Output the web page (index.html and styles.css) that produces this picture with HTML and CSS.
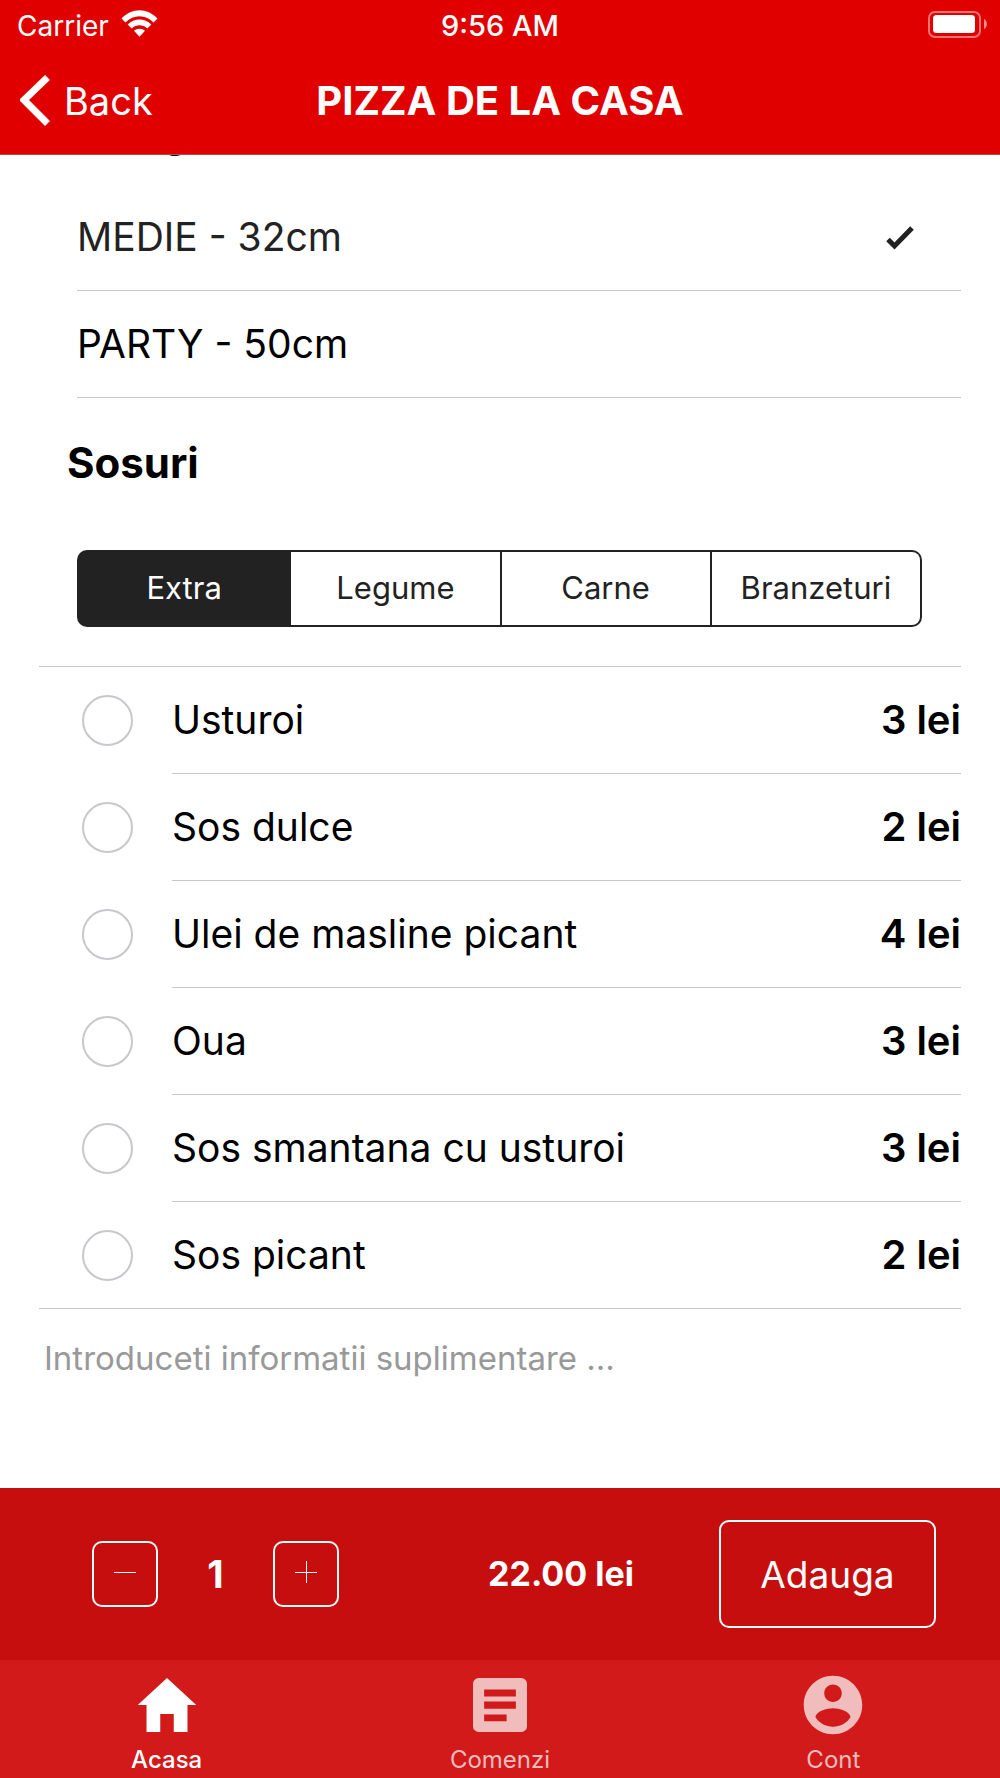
FILE: index.html
```html
<!DOCTYPE html>
<html lang="ro">
<head>
<meta charset="utf-8">
<meta name="viewport" content="width=device-width, initial-scale=1">
<title>Pizza de la casa</title>
<link rel="stylesheet" href="styles.css">
</head>
<body>
<header class="header">
  <div class="status">
    <span class="status-carrier">Carrier
      <svg class="wifi" viewBox="0 0 37 32" width="37" height="32" aria-hidden="true">
        <path d="M0.5 8.5C11-2.5 26-2.5 36.500 8.500L32.500 12.500C24.500 4.300 12.500 4.300 4.500 12.500Z"/>
        <path d="M6.700 14.500C13.500 7.700 23.500 7.700 30.300 14.500L26.300 18.500C21.800 14.200 15.200 14.200 10.700 18.500Z"/>
        <path d="M13 20.800C16 18 21 18 24 20.800L18.500 26.700Z"/>
      </svg>
    </span>
    <span class="status-time">9:56 AM</span>
    <svg class="battery" viewBox="0 0 60 30" width="60" height="30" aria-hidden="true">
      <rect class="battery-frame" x="1" y="1" width="51" height="25" rx="6"/>
      <rect x="5" y="4" width="42" height="18" rx="3.500"/>
      <path class="battery-tip" d="M56 8C59.800 9.500 59.800 16.500 56 18Z"/>
    </svg>
  </div>
  <nav class="navbar">
    <a class="back" href="#">
      <svg viewBox="0 0 30 52" width="30" height="52" aria-hidden="true"><path d="M27.500 2.500L4 25L27.500 48.500"/></svg>
      Back
    </a>
    <h1 class="title">PIZZA DE LA CASA</h1>
  </nav>
</header>

<main class="content">
  <h2 class="heading heading-scrolled">Categorie</h2>
  <div class="sizes">
    <label class="size size-selected">
      <input type="radio" name="size" checked>
      <span>MEDIE - 32cm</span>
      <svg class="tick" viewBox="0 0 28 25" width="28" height="25" aria-hidden="true"><path d="M2 14.500L8.500 21L26 3"/></svg>
    </label>
    <label class="size">
      <input type="radio" name="size">
      <span>PARTY - 50cm</span>
    </label>
  </div>

  <h2 class="heading">Sosuri</h2>
  <div class="segments">
    <button class="segment segment-active" type="button">Extra</button>
    <button class="segment" type="button">Legume</button>
    <button class="segment" type="button">Carne</button>
    <button class="segment" type="button">Branzeturi</button>
  </div>

  <div class="extras">
    <label class="extra"><input class="check" type="checkbox"><span class="extra-text"><span>Usturoi</span><b>3 lei</b></span></label>
    <label class="extra"><input class="check" type="checkbox"><span class="extra-text"><span>Sos dulce</span><b>2 lei</b></span></label>
    <label class="extra"><input class="check" type="checkbox"><span class="extra-text"><span>Ulei de masline picant</span><b>4 lei</b></span></label>
    <label class="extra"><input class="check" type="checkbox"><span class="extra-text"><span>Oua</span><b>3 lei</b></span></label>
    <label class="extra"><input class="check" type="checkbox"><span class="extra-text"><span>Sos smantana cu usturoi</span><b>3 lei</b></span></label>
    <label class="extra"><input class="check" type="checkbox"><span class="extra-text"><span>Sos picant</span><b>2 lei</b></span></label>
  </div>
  <textarea class="notes" rows="3" aria-label="Informatii suplimentare" placeholder="Introduceti informatii suplimentare ..."></textarea>
</main>

<footer class="footer">
  <div class="order">
    <div class="quantity">
      <button class="step" type="button" aria-label="Mai putin">
        <svg viewBox="0 0 22 22" width="22" height="22" aria-hidden="true"><path d="M0 11H22"/></svg>
      </button>
      <span class="count">1</span>
      <button class="step" type="button" aria-label="Mai mult">
        <svg viewBox="0 0 22 22" width="22" height="22" aria-hidden="true"><path d="M0 11H22M11 0V22"/></svg>
      </button>
    </div>
    <span class="total">22.00 lei</span>
    <button class="add" type="button">Adauga</button>
  </div>
  <nav class="tabs">
    <a class="tab tab-active" href="#">
      <svg viewBox="0 0 512 512" width="72" height="72" aria-hidden="true"><path d="M208 448V320h96v128h97.600V256H464L256 64 48 256h62.400v192z"/></svg>
      Acasa
    </a>
    <a class="tab" href="#">
      <svg viewBox="0 0 512 512" width="72" height="72" aria-hidden="true"><path fill-rule="evenodd" d="M104 64H408a40 40 0 0 1 40 40V408a40 40 0 0 1-40 40H104a40 40 0 0 1-40-40V104a40 40 0 0 1 40-40ZM143 145V195H369V145ZM143 231V283H369V231ZM143 324V372H303V324Z"/></svg>
      Comenzi
    </a>
    <a class="tab" href="#">
      <svg viewBox="0 0 512 512" width="72" height="72" aria-hidden="true"><path fill-rule="evenodd" d="M256 48C141.100 48 48 141.100 48 256s93.100 208 208 208 208-93.100 208-208S370.900 48 256 48zm0 62.400c34.500 0 62.400 27.900 62.400 62.400s-27.900 62.400-62.400 62.400-62.400-27.900-62.400-62.400 27.900-62.400 62.400-62.400zm0 300.400c-52 0-97.800-27-124.800-67.600.6-41.200 83.200-64 124.800-64s124.200 22.800 124.800 64c-27 40.600-72.800 67.600-124.800 67.600z"/></svg>
      Cont
    </a>
  </nav>
</footer>
</body>
</html>
```
FILE: styles.css
```css
* { box-sizing: border-box; }

body {
  margin: 0;
  min-height: 100vh;
  display: flex;
  flex-direction: column;
  background: #fff;
  color: #000;
  font: 400 39px/48px Inter, "Liberation Sans", sans-serif;
}

button, textarea { font: inherit; color: inherit; }
a { color: inherit; text-decoration: none; }
svg { display: block; flex: none; }

/* Header */
.header {
  background: #e10000;
  color: #fff;
  border-bottom: 1px solid #b84848;
}
.status {
  display: grid;
  grid-template-columns: 1fr auto 1fr;
  align-items: center;
  height: 52px;
  padding: 0 12px;
  font-size: 28px;
  line-height: 34px;
}
.status-carrier { display: flex; align-items: center; gap: 12px; padding-left: 5px; }
.status-time { font-size: 29px; font-weight: 500; }
.wifi { fill: #fff; }
.battery { fill: #fff; justify-self: end; }
.battery-frame { fill: none; stroke: #fff; stroke-width: 2; opacity: 0.45; }
.battery-tip { opacity: 0.55; }
.navbar {
  display: grid;
  grid-template-columns: 1fr auto 1fr;
  align-items: center;
  height: 102px;
  padding: 0 20px 4px;
}
.back { display: flex; align-items: center; gap: 14px; font-size: 38px; }
.back svg { fill: none; stroke: #fff; stroke-width: 7; }
.title { margin: 0; font-size: 40px; font-weight: 700; }

/* Product options */
.content { flex: 1; overflow: hidden; padding-left: 39px; }
.heading {
  margin: 0;
  padding: 41px 28px 63px;
  font-size: 42px;
  line-height: 48px;
  font-weight: 700;
}
.heading-scrolled { margin-top: -47px; padding: 0 28px 28px; }
.sizes { padding-left: 38px; margin-right: 39px; }
.size {
  display: flex;
  align-items: center;
  justify-content: space-between;
  height: 107px;
  padding-right: 47px;
  border-bottom: 1px solid #c8c7cc;
}
.size input { position: absolute; opacity: 0; }
.size-selected { color: #222; }
.tick { fill: none; stroke: #222; stroke-width: 5; }

.segments {
  display: grid;
  grid-template-columns: repeat(4, 1fr);
  height: 77px;
  margin: 0 78px 39px 38px;
  border: 2px solid #222;
  border-radius: 10px;
  background: #222;
  overflow: hidden;
}
.segment {
  padding: 0 0 2px;
  border: 0;
  border-left: 2px solid #222;
  background: #fff;
  color: #222;
  font-size: 31px;
  line-height: 38px;
}
.segment:first-child { border-left: 0; }
.segment-active { background: #222; color: #fff; }

.extras {
  margin-right: 39px;
  border: solid #c8c7cc;
  border-width: 1px 0;
}
.extra { display: flex; align-items: center; gap: 39px; padding-left: 43px; }
.check {
  appearance: none;
  flex: none;
  width: 51px;
  height: 51px;
  margin: 0;
  border: 2px solid #c8c7cc;
  border-radius: 50%;
}
.check:checked { background: #222; }
.extra-text {
  flex: 1;
  display: flex;
  align-items: center;
  justify-content: space-between;
  height: 107px;
  border-bottom: 1px solid #c8c7cc;
}
.extra:last-child .extra-text { border-bottom: 0; height: 106px; }
.extra b { font-size: 40px; font-weight: 600; }

.notes {
  display: block;
  width: 100%;
  padding: 29px 5px;
  border: 0;
  resize: none;
  outline: 0;
  background: none;
  font-size: 33px;
  line-height: 40px;
}
.notes::placeholder { color: #999; opacity: 1; }

/* Order bar and tabs */
.footer { color: #fff; background: #c60e0e; }
.order {
  display: grid;
  grid-template-columns: auto 1fr auto;
  align-items: center;
  height: 172px;
  padding: 0 64px 0 92px;
}
.quantity { display: flex; align-items: center; }
.step {
  display: grid;
  place-items: center;
  width: 66px;
  height: 66px;
  padding: 0 0 4px;
  border: 2px solid #fff;
  border-radius: 10px;
  background: none;
}
.step svg { fill: none; stroke: #fff; stroke-width: 1; shape-rendering: crispEdges; }
.count { width: 115px; text-align: center; font-size: 38px; font-weight: 700; }
.total { padding-left: 64px; text-align: center; font-size: 34px; font-weight: 700; }
.add {
  width: 217px;
  height: 108px;
  padding: 2px 0 0;
  border: 2px solid #fff;
  border-radius: 10px;
  background: none;
  font-size: 37px;
}
.tabs {
  display: grid;
  grid-template-columns: repeat(3, 1fr);
  height: 118px;
  background: #d21a1a;
}
.tab {
  display: flex;
  flex-direction: column;
  align-items: center;
  padding-top: 9px;
  font-size: 24px;
  line-height: 38px;
  color: #f0bcbc;
}
.tab svg { fill: currentColor; }
.tab-active { color: #fff; font-weight: 500; }
```
